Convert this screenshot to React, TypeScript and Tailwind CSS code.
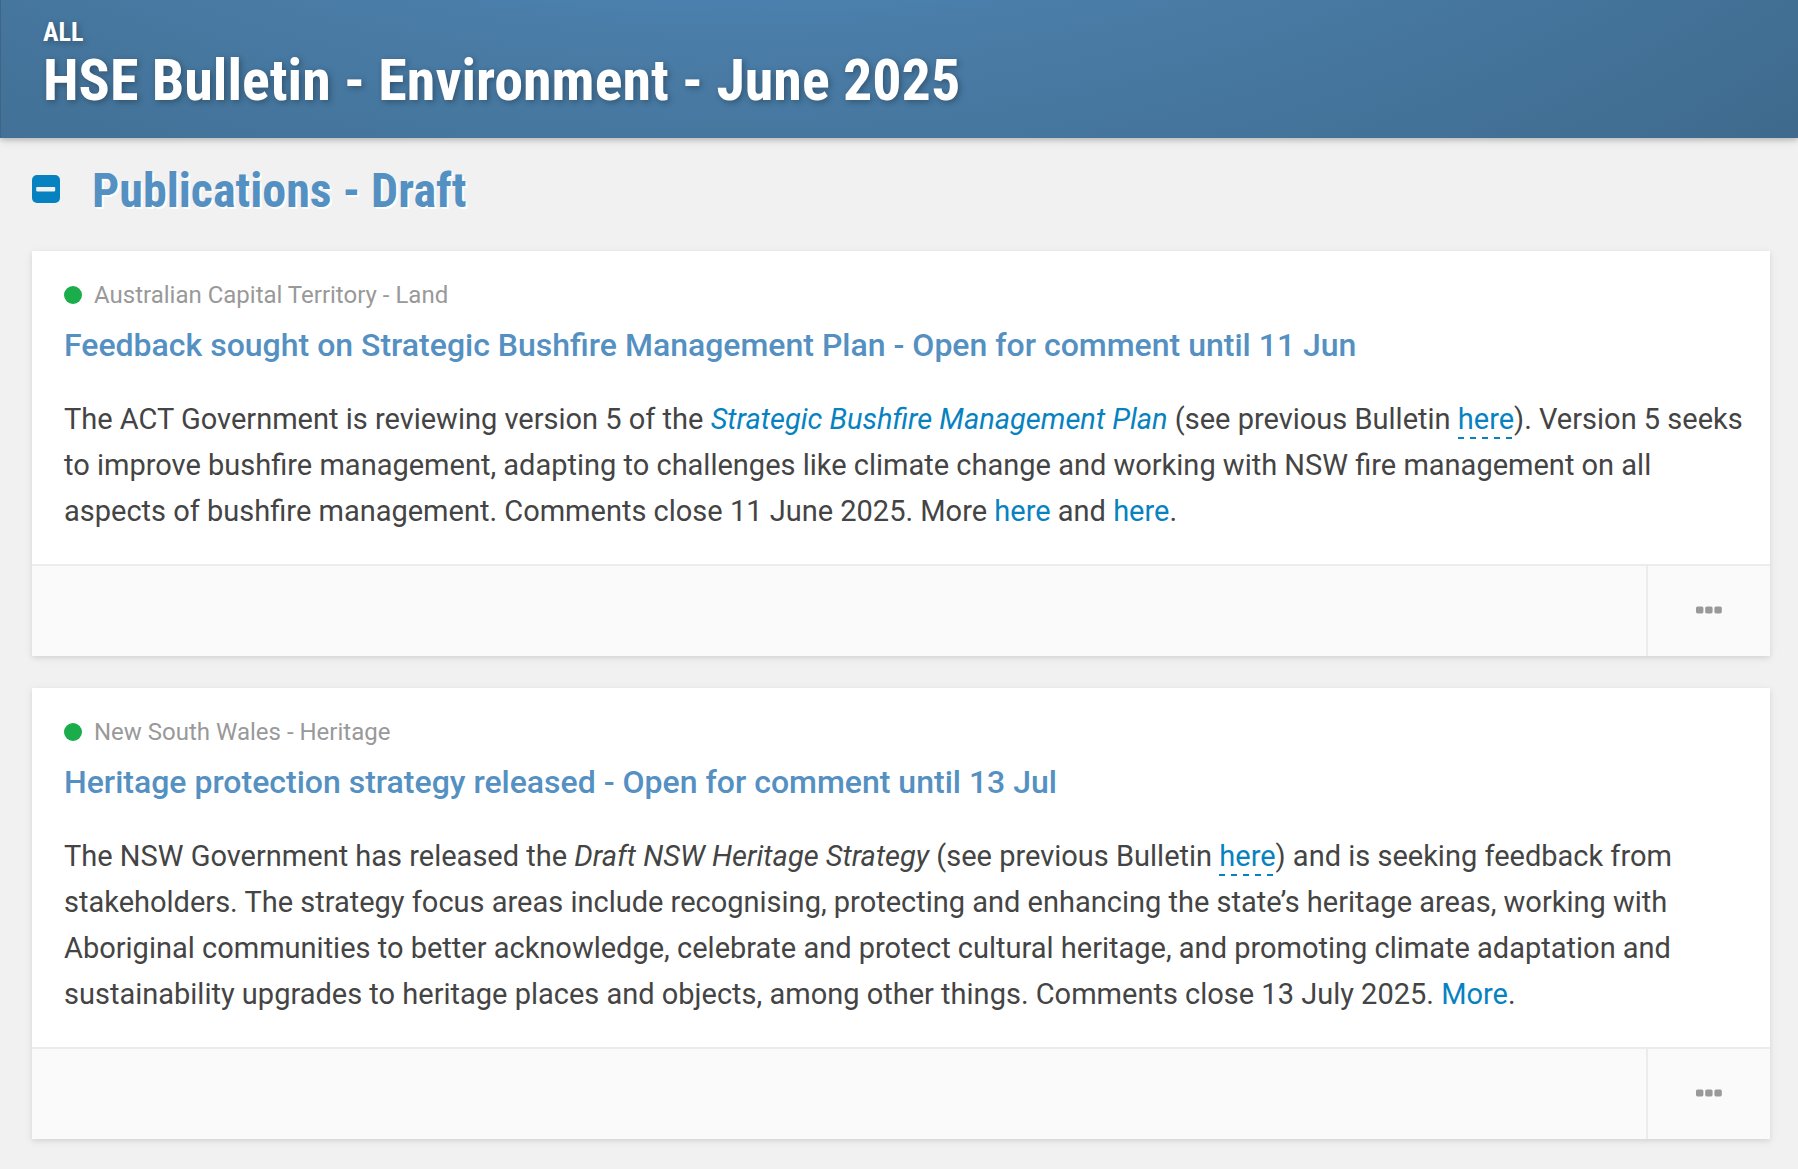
import React from 'react';

interface Bulletin {
  id: string;
  region: string;
  title: string;
  body: React.ReactNode;
}

interface TextLinkProps {
  children: React.ReactNode;
  dashed?: boolean;
}

function TextLink({ children, dashed }: TextLinkProps) {
  return (
    <a
      href="#"
      className={
        dashed
          ? 'text-[#0782c1] pb-[3px] bg-[linear-gradient(90deg,#0782c1_50%,transparent_50%)] bg-[length:12px_2px] bg-repeat-x bg-bottom-left'
          : 'text-[#0782c1]'
      }
    >
      {children}
    </a>
  );
}

const BULLETINS: Bulletin[] = [
  {
    id: 'act-bushfire',
    region: 'Australian Capital Territory - Land',
    title: 'Feedback sought on Strategic Bushfire Management Plan - Open for comment until 11 Jun',
    body: (
      <>
        The ACT Government is reviewing version 5 of the{' '}
        <TextLink><em>Strategic Bushfire Management Plan</em></TextLink> (see previous Bulletin{' '}
        <TextLink dashed>here</TextLink>). Version 5 seeks to improve bushfire management, adapting to
        challenges like climate change and working with NSW fire management on all aspects of bushfire
        management. Comments close 11 June 2025. More <TextLink>here</TextLink> and{' '}
        <TextLink>here</TextLink>.
      </>
    ),
  },
  {
    id: 'nsw-heritage',
    region: 'New South Wales - Heritage',
    title: 'Heritage protection strategy released - Open for comment until 13 Jul',
    body: (
      <>
        The NSW Government has released the <em>Draft NSW Heritage Strategy</em> (see previous Bulletin{' '}
        <TextLink dashed>here</TextLink>) and is seeking feedback from stakeholders. The strategy focus
        areas include recognising, protecting and enhancing the state’s heritage areas, working with
        Aboriginal communities to better acknowledge, celebrate and protect cultural heritage, and
        promoting climate adaptation and sustainability upgrades to heritage places and objects, among
        other things. Comments close 13 July 2025. <TextLink>More</TextLink>.
      </>
    ),
  },
];

function BulletinCard({ item }: { item: Bulletin }) {
  return (
    <article className="bg-white shadow-[0_2px_5px_rgba(0,0,0,0.08),0_2px_10px_rgba(0,0,0,0.06)]">
      <div className="pt-7 pr-6 pb-[30px] pl-8">
        <div className="flex items-center gap-3 text-2xl text-[#999999]">
          <span className="size-[18px] rounded-full bg-[#1bac4b]" />
          <span>{item.region}</span>
        </div>
        <h3 className="mt-3 text-[32px] leading-[44px] font-medium text-[#5490c1]">
          <a href="#">{item.title}</a>
        </h3>
        <p className="mt-[29px] text-[29px] leading-[46px] text-[#444444]">{item.body}</p>
      </div>

      {/* Footer */}
      <div className="flex h-[92px] justify-end border-t-2 border-[#ececec] bg-[#fafafa]">
        <button
          type="button"
          aria-label="More options"
          className="flex w-[124px] items-center justify-center border-l-2 border-[#ececec] pb-[3px]"
        >
          <svg width="26" height="8" viewBox="0 0 26 8" fill="#999999">
            <rect x="0" y="0.4" width="7.4" height="7" rx="1.6" />
            <rect x="9.2" y="0.4" width="7.4" height="7" rx="1.6" />
            <rect x="18.4" y="0.4" width="7.4" height="7" rx="1.6" />
          </svg>
        </button>
      </div>
    </article>
  );
}

export default function App() {
  return (
    <div className="min-h-screen bg-[#f1f1f1] pb-7 font-['Roboto',sans-serif]">
      <header className="border-l border-[#3c6587] bg-[radial-gradient(circle_at_41%_-1600px,#4b80ae_1600px,#4a7da8_1630px,#46779f_1740px,#3e698c_2050px)] px-[42px] pt-4 pb-[26px] font-['Roboto_Condensed','Roboto',sans-serif] font-bold text-white shadow-[0_2px_5px_rgba(0,0,0,0.16),0_2px_10px_rgba(0,0,0,0.12)] text-shadow-[2px_2px_6px_rgba(0,0,0,0.3)]">
        <div className="text-[26px] leading-8">ALL</div>
        <h1 className="text-[58px] leading-[64px]">HSE Bulletin - Environment - June 2025</h1>
      </header>

      <main className="pr-7 pl-8">
        {/* Section heading */}
        <div className="flex items-center gap-8 pt-6 pb-8">
          <button type="button" aria-label="Collapse section" className="pb-[3px]">
            <svg width="28" height="28" viewBox="0 0 28 28" className="block">
              <rect width="28" height="28" rx="5" fill="#0782c1" />
              <rect x="4.2" y="12" width="19" height="4.4" rx="0.8" fill="#f1f1f1" />
            </svg>
          </button>
          <h2 className="font-['Roboto_Condensed','Roboto',sans-serif] text-5xl leading-[57px] font-bold text-[#5490c1] text-shadow-[2px_2px_0_#ffffff]">
            Publications - Draft
          </h2>
        </div>

        <div className="flex flex-col gap-8">
          {BULLETINS.map((item) => (
            <BulletinCard key={item.id} item={item} />
          ))}
        </div>
      </main>
    </div>
  );
}
